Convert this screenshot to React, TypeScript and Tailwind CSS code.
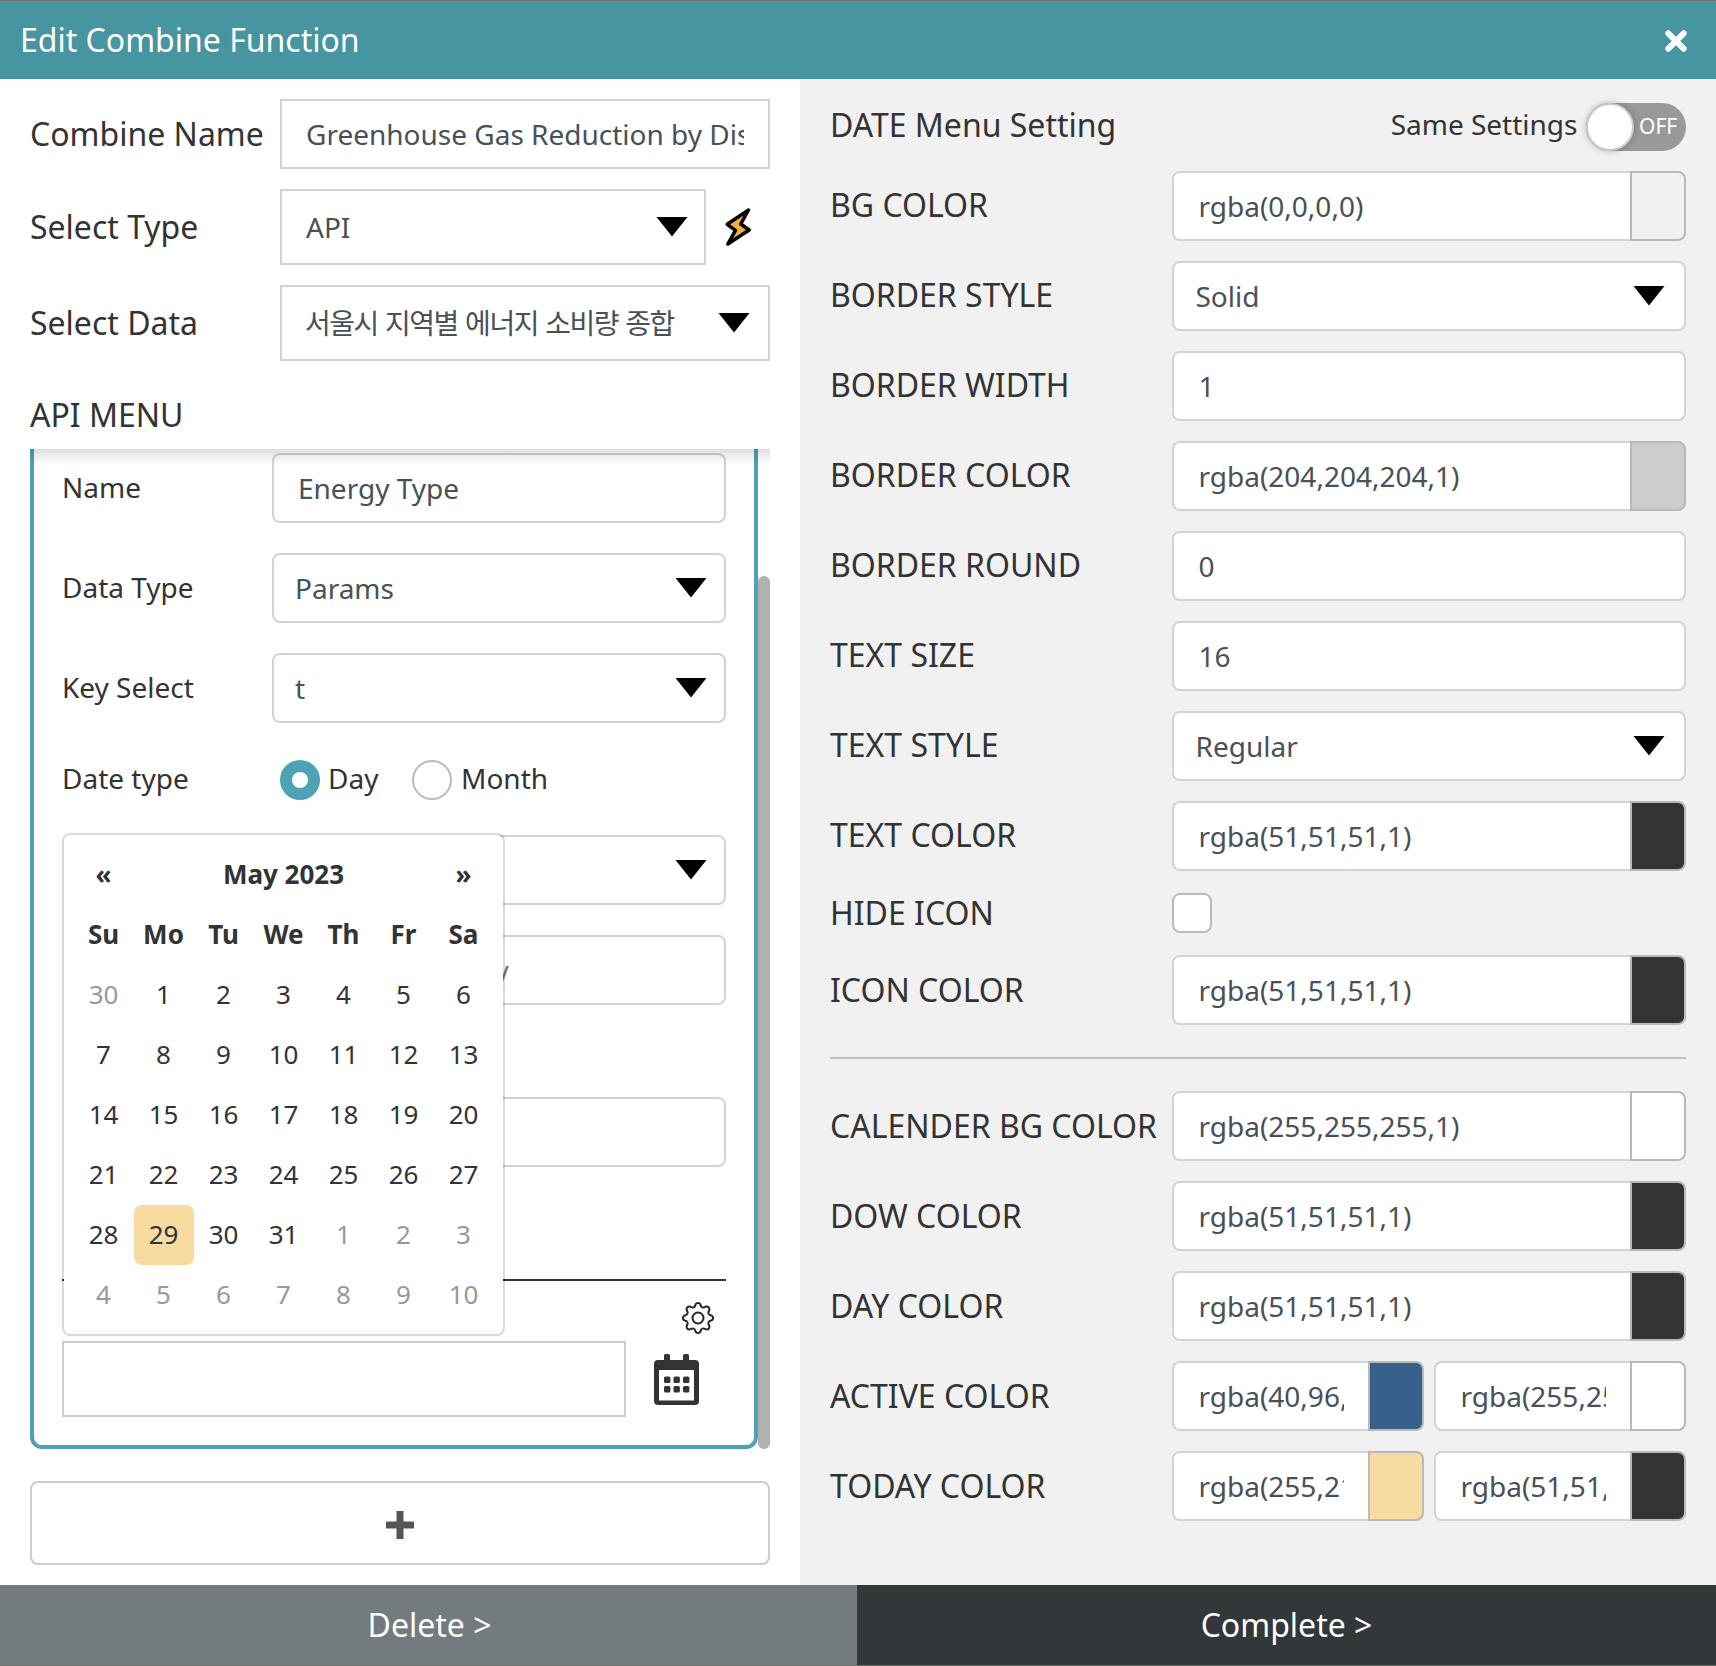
import React from "react";
import { BsGear } from "react-icons/bs";

const Arrow = () => (
  <svg className="h-5 w-8 shrink-0" viewBox="0 0 32 20">
    <path d="M0.500 0H31.500L16 19.500Z" fill="#000" />
  </svg>
);

const CloseIcon = () => (
  <svg className="size-[22px] shrink-0" viewBox="0 0 22 22">
    <path d="M3.300 3.300l15.400 15.400M18.700 3.300L3.300 18.700" stroke="#fff" strokeWidth="6" strokeLinecap="round" />
  </svg>
);

const BoltIcon = () => (
  <svg className="h-10 w-7 shrink-0" viewBox="0 0 28 40">
    <path
      d="M24.500 3 3.200 17.300l8.300 6L3.800 37 25.200 23l-8.400-6Z"
      fill="#f4ae3d"
      stroke="#000"
      strokeWidth="3.500"
      strokeLinejoin="round"
    />
  </svg>
);

const CalendarIcon = () => (
  <svg className="h-[51px] w-[45px] shrink-0" viewBox="0 0 45 51">
    <path
      fillRule="evenodd"
      fill="#333"
      d="M10 1.500a1.500 1.500 0 0 1 1.500-1.500h3a1.500 1.500 0 0 1 1.500 1.500V6h13V1.500a1.500 1.500 0 0 1 1.500-1.500h3a1.500 1.500 0 0 1 1.500 1.500V6h6a4 4 0 0 1 4 4v37a4 4 0 0 1-4 4H4a4 4 0 0 1-4-4V10a4 4 0 0 1 4-4h6ZM5 16v30.500h35V16Z"
    />
    {[10, 19.5, 29].map((x) =>
      [22.5, 32].map((y) => <rect key={`${x}-${y}`} x={x} y={y} width="6.400" height="6.400" rx="1.500" fill="#333" />)
    )}
  </svg>
);

const TopRow = ({ label, h, children }: { label: string; h: string; children: React.ReactNode }) => (
  <div className={`flex items-center ${h}`}>
    <div className="w-[250px] shrink-0 text-[32px] leading-[44px]">{label}</div>
    {children}
  </div>
);

const box = "flex items-center border-2 border-[#ced4da] bg-white text-[28px] leading-[40px] text-[#495057]";

const Field = ({ label, children }: { label: string; children?: React.ReactNode }) => (
  <div className="flex h-[70px] items-center">
    <div className="w-[210px] shrink-0 pb-0.5 text-[28px] leading-[38px]">{label}</div>
    {children}
  </div>
);

const InnerInput = ({ value = "", placeholder = "" }: { value?: string; placeholder?: string }) => (
  <div className={`${box} h-[70px] w-[454px] rounded-lg px-6`}>
    {value || <span className="tracking-[-0.25px] text-[#6c757d]">{placeholder}</span>}
  </div>
);

const InnerSelect = ({ value = "" }: { value?: string }) => (
  <div className={`${box} h-[70px] w-[454px] justify-between rounded-lg pr-[17px] pl-[21px]`}>
    <span>{value}</span>
    <Arrow />
  </div>
);

const weeks: string[][] = [
  ["30", "1", "2", "3", "4", "5", "6"],
  ["7", "8", "9", "10", "11", "12", "13"],
  ["14", "15", "16", "17", "18", "19", "20"],
  ["21", "22", "23", "24", "25", "26", "27"],
  ["28", "29", "30", "31", "1", "2", "3"],
  ["4", "5", "6", "7", "8", "9", "10"],
];

const Calendar = () => (
  <div className="absolute top-[384px] left-8 w-[443px] rounded-lg border-2 border-black/15 bg-white bg-clip-padding py-2.5 pr-[9.500px] pl-[9.500px] text-[26px] leading-[58px]">
    <div className="grid auto-rows-[60px] grid-cols-7 text-center font-bold">
      <div>«</div>
      <div className="col-span-5">May 2023</div>
      <div>»</div>
      {["Su", "Mo", "Tu", "We", "Th", "Fr", "Sa"].map((d) => (
        <div key={d}>{d}</div>
      ))}
    </div>
    <div className="-mb-px grid auto-rows-[60px] grid-cols-7 text-center">
      {weeks.flatMap((week, w) =>
        week.map((d, i) => {
          const n = Number(d);
          const outside = (w === 0 && n > 20) || (w > 3 && n < 15);
          const today = w === 4 && n === 29;
          return (
            <div key={`${w}-${i}`} className={outside ? "text-[#999]" : today ? "rounded-lg bg-[#f8dba1]" : ""}>
              {d}
            </div>
          );
        })
      )}
    </div>
  </div>
);

const ApiMenu = () => (
  <div className="relative flex h-[1000px] w-[740px]">
    <div className="w-[728px] rounded-b-xl border-4 border-t-0 border-[#4ca3b4] px-7 pt-1">
      <div className="flex flex-col gap-[30px]">
        <Field label="Name">
          <InnerInput value="Energy Type" />
        </Field>
        <Field label="Data Type">
          <InnerSelect value="Params" />
        </Field>
        <Field label="Key Select">
          <InnerSelect value="t" />
        </Field>
      </div>
      <div className="mt-[37px] flex h-10 items-center text-[28px] leading-[38px]">
        <div className="w-[218px] pb-1">Date type</div>
        <div className="flex size-10 items-center justify-center rounded-full bg-[#4ca3b4]">
          <div className="size-4 rounded-full bg-white" />
        </div>
        <div className="w-[92px] pb-1 pl-2">Day</div>
        <div className="size-10 rounded-full border-2 border-[#bbb] bg-white" />
        <div className="pb-1 pl-[9px]">Month</div>
      </div>
      <div className="mt-[35px] flex flex-col items-end gap-[30px]">
        <InnerSelect />
        <InnerInput placeholder="Please enter key" />
      </div>
      <div className="mt-[92px] flex justify-end">
        <InnerInput />
      </div>
      <div className="mt-28 h-0.5 bg-[#333]" />
      <div className="mt-[21px] flex justify-end pr-3">
        <BsGear className="size-8 text-[#212529]" />
      </div>
      <div className="mt-[7px] flex items-center gap-7">
        <div className="h-[76px] w-[564px] border-2 border-[#ccc] bg-white" />
        <CalendarIcon />
      </div>
    </div>
    <div className="w-3 pt-[127px]">
      <div className="h-[873px] rounded-full bg-[#b1b1b1]" />
    </div>
    <Calendar />
    <div className="absolute inset-x-0 top-0 h-4 bg-linear-to-b from-black/13 to-transparent" />
  </div>
);

type Row = { label: string; kind: "color" | "select" | "text"; items: [string, string?][] };

const topRows: Row[] = [
  { label: "BG COLOR", kind: "color", items: [["rgba(0,0,0,0)", "bg-[#f1f1f1]"]] },
  { label: "BORDER STYLE", kind: "select", items: [["Solid"]] },
  { label: "BORDER WIDTH", kind: "text", items: [["1"]] },
  { label: "BORDER COLOR", kind: "color", items: [["rgba(204,204,204,1)", "bg-[#ccc]"]] },
  { label: "BORDER ROUND", kind: "text", items: [["0"]] },
  { label: "TEXT SIZE", kind: "text", items: [["16"]] },
  { label: "TEXT STYLE", kind: "select", items: [["Regular"]] },
  { label: "TEXT COLOR", kind: "color", items: [["rgba(51,51,51,1)", "bg-[#333]"]] },
];

const iconRow: Row = { label: "ICON COLOR", kind: "color", items: [["rgba(51,51,51,1)", "bg-[#333]"]] };

const calendarRows: Row[] = [
  { label: "CALENDER BG COLOR", kind: "color", items: [["rgba(255,255,255,1)", "bg-white"]] },
  { label: "DOW COLOR", kind: "color", items: [["rgba(51,51,51,1)", "bg-[#333]"]] },
  { label: "DAY COLOR", kind: "color", items: [["rgba(51,51,51,1)", "bg-[#333]"]] },
  { label: "ACTIVE COLOR", kind: "color", items: [["rgba(40,96,144,1)", "bg-[#365f8c]"], ["rgba(255,255,255,1)", "bg-white"]] },
  { label: "TODAY COLOR", kind: "color", items: [["rgba(255,219,153,1)", "bg-[#f8dba1]"], ["rgba(51,51,51,1)", "bg-[#333]"]] },
];

const SettingRow = ({ row, labelPad = "pb-0.5" }: { row: Row; labelPad?: string }) => (
  <div className="flex h-[70px] items-center">
    <div className={`w-[342px] shrink-0 text-[32px] leading-[44px] whitespace-nowrap ${labelPad}`}>{row.label}</div>
    <div className="flex min-w-0 flex-1 gap-2.5">
      {row.items.map(([value, swatch], i) =>
        row.kind === "color" ? (
          <div key={i} className="flex h-[70px] min-w-0 flex-1">
            <div className={`${box} min-w-0 flex-1 rounded-l-lg border-r-0 pr-6 pl-[24.500px]`}>
              <div className="overflow-hidden whitespace-nowrap">{value}</div>
            </div>
            <div className={`w-14 shrink-0 rounded-r-lg border-2 border-[#b9b9b9] ${swatch}`} />
          </div>
        ) : row.kind === "select" ? (
          <div key={i} className={`${box} h-[70px] flex-1 justify-between rounded-lg pr-[19px] pl-[21.500px]`}>
            <span>{value}</span>
            <Arrow />
          </div>
        ) : (
          <div key={i} className={`${box} h-[70px] flex-1 rounded-lg pr-6 pl-[24.500px]`}>
            {value}
          </div>
        )
      )}
    </div>
  </div>
);

export default function App() {
  return (
    <div className="flex h-[1666px] w-[1716px] flex-col overflow-hidden bg-white font-['Noto_Sans','Noto_Sans_CJK_KR',sans-serif] text-[#333]">
      <header className="flex h-[79px] shrink-0 items-center justify-between border-t border-[#6f7374] bg-[#4795a1] pr-[29px] pl-5 text-white">
        <h1 className="text-[32px] leading-[44px]">Edit Combine Function</h1>
        <div className="pt-0.5">
          <CloseIcon />
        </div>
      </header>

      <main className="flex h-[1506px] shrink-0">
        <section className="w-[800px] px-[30px] pt-5">
          <div className="flex flex-col gap-5">
            <TopRow label="Combine Name" h="h-[70px]">
              <div className={`${box} h-full w-[490px] px-6`}>
                <div className="overflow-hidden whitespace-nowrap">Greenhouse Gas Reduction by District</div>
              </div>
            </TopRow>
            <TopRow label="Select Type" h="h-[76px]">
              <div className={`${box} h-full w-[426px] justify-between pr-4 pl-6`}>
                <span>API</span>
                <Arrow />
              </div>
              <div className="pl-[18px]">
                <BoltIcon />
              </div>
            </TopRow>
            <TopRow label="Select Data" h="h-[76px]">
              <div className={`${box} h-full w-[490px] justify-between pr-[18px] pl-[23px]`}>
                <span className="tracking-[-1.5px] [word-spacing:1.5px]">서울시 지역별 에너지 소비량 종합</span>
                <Arrow />
              </div>
            </TopRow>
          </div>
          <div className="mt-8 mb-3 text-[32px] leading-[44px]">API MENU</div>
          <ApiMenu />
          <div className="mt-8 flex h-[84px] items-center justify-center rounded-lg border-2 border-[#ccc]">
            <svg className="mt-1 size-7" viewBox="0 0 28 28">
              <path d="M10.500 0h7v10.500H28v7H17.500V28h-7V17.500H0v-7h10.500Z" fill="#555" />
            </svg>
          </div>
        </section>

        <section className="w-[916px] bg-[#f1f1f1] px-[30px] pt-6">
          <div className="flex h-12 items-center">
            <h2 className="flex-1 pb-1 text-[32px] leading-[44px]">DATE Menu Setting</h2>
            <span className="pr-[8.500px] pb-1.5 text-[28px] leading-[38px]">Same Settings</span>
            <div className="flex h-12 w-[100px] items-center rounded-full bg-[#999] text-[21px] text-white">
              <div className="size-12 rounded-full border-2 border-[#ccc] bg-white shadow-[0_0_6px_rgba(0,0,0,0.25)]" />
              <span className="pl-[5px]">OFF</span>
            </div>
          </div>
          <div className="mt-5 flex flex-col gap-5">
            {topRows.map((row) => (
              <SettingRow key={row.label} row={row} />
            ))}
          </div>
          <div className="mt-[22px] mb-[22px] flex h-10 items-center">
            <div className="w-[342px] text-[32px] leading-[44px]">HIDE ICON</div>
            <div className="size-10 rounded-lg border-2 border-[#bbb] bg-white" />
          </div>
          <SettingRow row={iconRow} labelPad="pb-0" />
          <div className="my-8 h-0.5 bg-[#bfbfbf]" />
          <div className="flex flex-col gap-5">
            {calendarRows.map((row) => (
              <SettingRow key={row.label} row={row} labelPad="pb-0" />
            ))}
          </div>
        </section>
      </main>

      <footer className="flex h-[81px] shrink-0 border-b border-[#6a6d6e] text-[32px] leading-[80px] text-white">
        <div className="w-[857px] bg-[#737b7e] pl-0.5 text-center">Delete &gt;</div>
        <div className="flex-1 bg-[#32373a] text-center">Complete &gt;</div>
      </footer>
    </div>
  );
}
